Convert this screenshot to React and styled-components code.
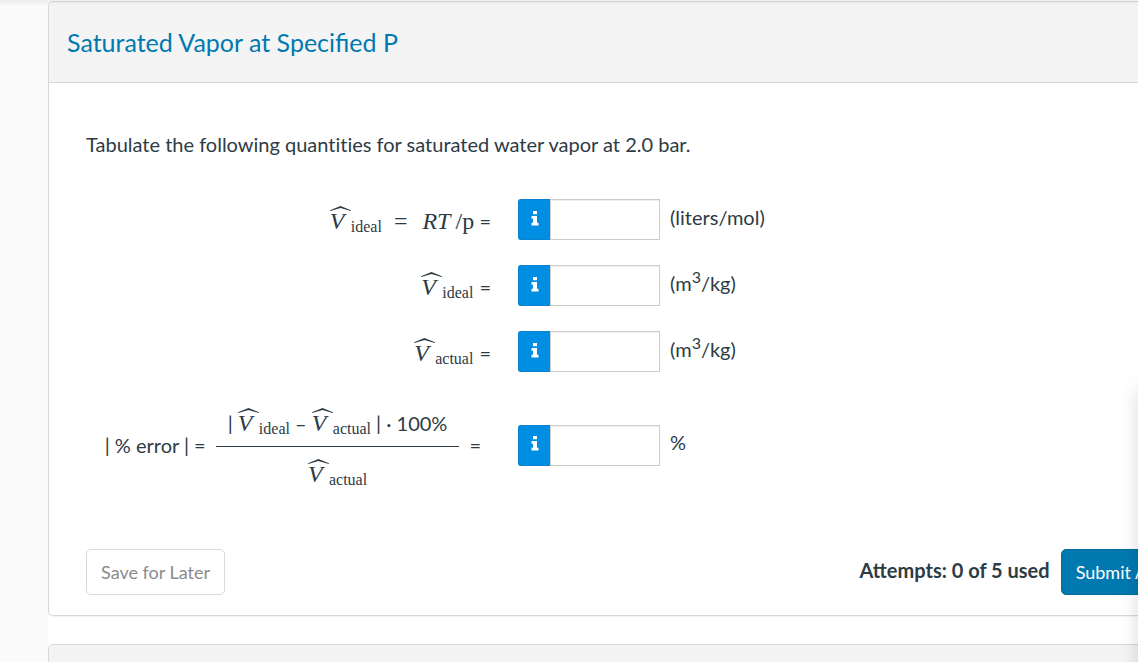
import React from 'react';
import styled, { createGlobalStyle } from 'styled-components';

const GlobalStyle = createGlobalStyle`
  * {
    box-sizing: border-box;
  }

  body {
    margin: 0;
    overflow: hidden;
    background-color: #fff;
    color: #2d3b45;
    font-family: Lato, 'Open Sans', sans-serif;
    font-size: 20px;
    line-height: 24px;
  }
`;

const Page = styled.div`
  position: relative;
  display: flex;
  height: 100vh;
  overflow: hidden;
`;

const Sidebar = styled.aside`
  flex: 0 0 48px;
  background-color: #fafafa;
`;

const Main = styled.main`
  flex: 1;
  min-width: 0;
  padding-top: 1px;
`;

// Shadow of the page header
const TopShadow = styled.div`
  position: absolute;
  top: 0;
  left: 0;
  right: 0;
  height: 6px;
  background: linear-gradient(rgba(0, 0, 0, 0.06), rgba(0, 0, 0, 0));
  pointer-events: none;
`;

// Shadow of the help drawer docked at the right edge
const DrawerShadow = styled.div`
  position: absolute;
  top: 390px;
  left: 100%;
  bottom: -20px;
  width: 40px;
  box-shadow: 0 0 20px rgba(0, 0, 0, 0.15);
  pointer-events: none;
`;

const Card = styled.section`
  border: 1px solid #d7d8d9;
  border-right: none;
  border-radius: 5px 0 0 5px;
  box-shadow: 0 1px 1px rgba(0, 0, 0, 0.05);
  margin-bottom: 28px;
  overflow: hidden;
`;

const CardHeader = styled.header`
  display: flex;
  align-items: center;
  min-height: 81px;
  padding: 0 18px;
  background-color: #f4f4f4;
  border-bottom: 1px solid #d7d8d9;
`;

const CardTitle = styled.h2`
  margin: 0;
  color: #0079b0;
  font-size: 25px;
  font-weight: 400;
  line-height: 32px;
`;

const CardBody = styled.div`
  padding: 49px 0 20px 37px;
`;

const Prompt = styled.p`
  margin: 0 0 43px;
  font-variant-ligatures: none;
`;

const Rows = styled.div`
  display: grid;
  gap: 25px;
`;

const Row = styled.div`
  display: grid;
  grid-template-columns: 405px 142px 1fr;
  align-items: center;
  column-gap: 27px;
  height: ${(props) => (props.$tall ? '96px' : '41px')};
`;

const Formula = styled.label`
  display: flex;
  justify-content: flex-end;
  align-items: ${(props) => (props.$centered ? 'center' : 'baseline')};
  gap: ${(props) => (props.$centered ? '10px' : '6px')};
  padding-top: ${(props) => (props.$centered ? '0' : '2px')};
  padding-right: ${(props) => (props.$centered ? '10px' : '0')};
  white-space: nowrap;
`;

const Fraction = styled.span`
  display: flex;
  flex-direction: column;
  align-items: center;
  padding-top: 5px;
`;

const Numerator = styled.span`
  padding: 0 12px 9px;
  border-bottom: 1px solid #2d3b45;
`;

const Denominator = styled.span`
  padding-top: 12px;
`;

const Symbol = styled.span`
  display: inline-block;
  width: 21px;
  font-family: 'Liberation Serif', serif;
  font-size: 24px;
  font-style: italic;
  line-height: 20px;

  svg {
    display: block;
  }
`;

const Subscript = styled.span`
  font-family: 'Liberation Serif', serif;
  font-size: 16px;
  line-height: 16px;
  vertical-align: -3px;
`;

const Serif = styled.span`
  font-family: 'Liberation Serif', serif;
  font-size: 24px;
  font-style: ${(props) => (props.$italic ? 'italic' : 'normal')};
`;

const Equals = styled(Serif)`
  margin: 0 9px 0 6px;
`;

const Field = styled.div`
  display: flex;
  height: 41px;
`;

const InfoButton = styled.button`
  display: flex;
  align-items: center;
  justify-content: center;
  flex: 0 0 32px;
  padding: 0 0 3px;
  border: 1px solid #0a82d2;
  border-right: none;
  border-radius: 3px 0 0 3px;
  background-color: #008ee2;
  cursor: pointer;
`;

const AnswerInput = styled.input`
  flex: 1;
  min-width: 0;
  padding: 0 8px;
  border: 1px solid #ccc;
  border-radius: 0;
  box-shadow: inset 0 1px 1px rgba(0, 0, 0, 0.075);
  color: inherit;
  font: inherit;
`;

const Unit = styled.span`
  margin-left: -17px;
  padding-bottom: 6px;

  sup {
    font-size: 16px;
    line-height: 0;
  }
`;

const Footer = styled.footer`
  display: flex;
  align-items: center;
  justify-content: space-between;
  margin-top: 56px;
`;

// The submit button runs past the right edge of the window
const SubmitGroup = styled.div`
  display: flex;
  align-items: center;
  gap: 11px;
  margin-right: -72px;
`;

const Attempts = styled.span`
  padding-bottom: 4px;
  font-weight: 700;
`;

const Button = styled.button`
  height: 46px;
  padding: 0 14px;
  border: 1px solid ${(props) => (props.$primary ? '#006b9c' : '#d9dadb')};
  border-radius: 5px;
  background-color: ${(props) => (props.$primary ? '#0079b0' : '#fff')};
  color: ${(props) => (props.$primary ? '#fff' : '#8b8b8b')};
  font-family: inherit;
  font-size: 18px;
  white-space: nowrap;
  cursor: pointer;
`;

const VHat = ({ sub }) => (
  <span>
    <Symbol>
      <svg width="21" height="5" viewBox="0 0 21 5" aria-hidden="true">
        <path d="M0 4.2 L10.5 0 L21 4.2 L20.7 5 L10.5 1.9 L0.3 5 Z" fill="#2d3b45" />
      </svg>
      V
    </Symbol>
    <Subscript>{sub}</Subscript>
  </span>
);

const InfoIcon = () => (
  <svg width="8" height="15" viewBox="0 0 8 15" fill="#fff" aria-hidden="true">
    <path d="M2 0h4v3.2H2z M0.5 5H6v6.8h1.5v2.7h-7v-2.7H2V7.7H0.5z" />
  </svg>
);

const AnswerRow = ({ id, unit, tall, centered, children }) => (
  <Row $tall={tall}>
    <Formula htmlFor={id} $centered={centered}>
      {children}
    </Formula>
    <Field>
      <InfoButton type="button" aria-label="Answer format">
        <InfoIcon />
      </InfoButton>
      <AnswerInput id={id} type="text" />
    </Field>
    <Unit>{unit}</Unit>
  </Row>
);

const PerKilogram = () => (
  <>
    (m<sup>3</sup>/kg)
  </>
);

const App = () => {
  return (
    <Page>
      <GlobalStyle />
      <Sidebar />
      <Main>
        <Card>
          <CardHeader>
            <CardTitle>Saturated Vapor at Specified P</CardTitle>
          </CardHeader>
          <CardBody>
            <Prompt>Tabulate the following quantities for saturated water vapor at 2.0 bar.</Prompt>
            <Rows>
              <AnswerRow id="ideal-molar" unit="(liters/mol)">
                <VHat sub="ideal" />
                <Equals>=</Equals>
                <span>
                  <Serif $italic>RT</Serif> <Serif>/p</Serif> =
                </span>
              </AnswerRow>
              <AnswerRow id="ideal-mass" unit={<PerKilogram />}>
                <VHat sub="ideal" />
                <span>=</span>
              </AnswerRow>
              <AnswerRow id="actual-mass" unit={<PerKilogram />}>
                <VHat sub="actual" />
                <span>=</span>
              </AnswerRow>
              <AnswerRow id="percent-error" unit="%" tall centered>
                <span>| % error | =</span>
                <Fraction>
                  <Numerator>
                    | <VHat sub="ideal" /> – <VHat sub="actual" /> | · 100%
                  </Numerator>
                  <Denominator>
                    <VHat sub="actual" />
                  </Denominator>
                </Fraction>
                <span>=</span>
              </AnswerRow>
            </Rows>
            <Footer>
              <Button type="button">Save for Later</Button>
              <SubmitGroup>
                <Attempts>Attempts: 0 of 5 used</Attempts>
                <Button type="submit" $primary>
                  Submit Answer
                </Button>
              </SubmitGroup>
            </Footer>
          </CardBody>
        </Card>
        <Card>
          <CardHeader />
        </Card>
      </Main>
      <TopShadow />
      <DrawerShadow />
    </Page>
  );
};

export default App;
